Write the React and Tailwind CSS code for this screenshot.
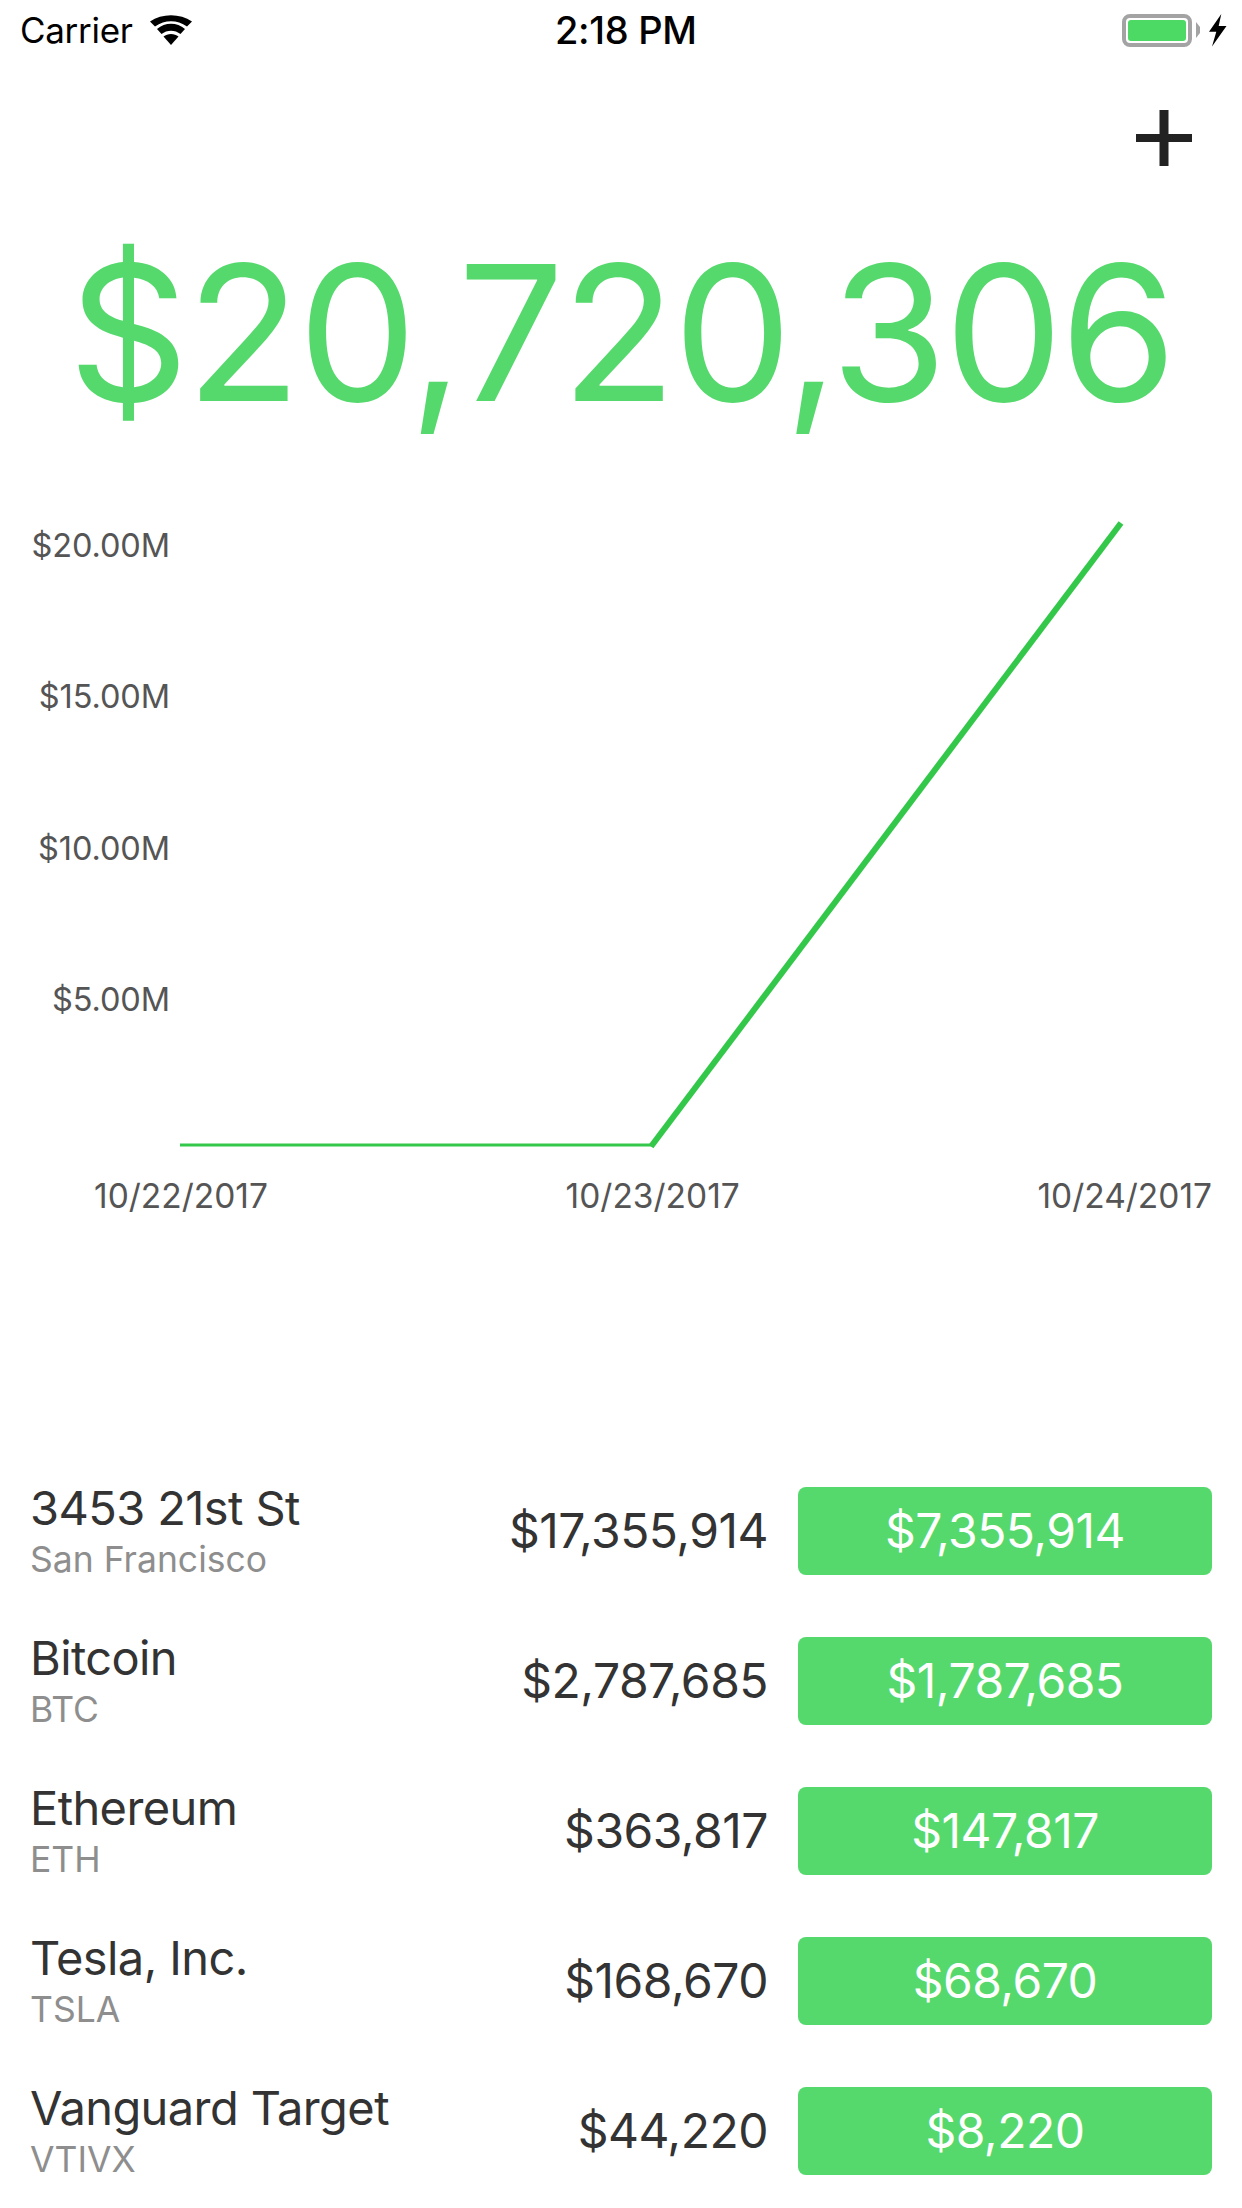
import React from "react";

const FONT = "font-['Inter','Liberation_Sans',sans-serif]";

const holdings = [
  { name: "3453 21st St", sub: "San Francisco", value: "$17,355,914", gain: "$7,355,914" },
  { name: "Bitcoin", sub: "BTC", value: "$2,787,685", gain: "$1,787,685" },
  { name: "Ethereum", sub: "ETH", value: "$363,817", gain: "$147,817" },
  { name: "Tesla, Inc.", sub: "TSLA", value: "$168,670", gain: "$68,670" },
  { name: "Vanguard Target", sub: "VTIVX", value: "$44,220", gain: "$8,220" },
];

const yLabels = ["$20.00M", "$15.00M", "$10.00M", "$5.00M"];
const xLabels = ["10/22/2017", "10/23/2017", "10/24/2017"];

const StatusBar = () => (
  <div className="h-[60px] flex items-center justify-between relative px-[20px]">
    <div className="flex items-center gap-[17px]">
      <span className="text-[35px] leading-[40px] text-black tracking-[-0.3px]">Carrier</span>
      <svg width="42" height="30" viewBox="0 0 42 30">
        <path d="M21 30 L13.5 21.5 C17.5 18 24.5 18 28.5 21.5 Z" fill="#000" />
        <path d="M11.5 19 L7 14 C15 7 27 7 35 14 L30.5 19 C25 14.5 17 14.5 11.5 19 Z" fill="#000" />
        <path d="M5 11.5 L0 6.5 C12 -2 30 -2 42 6.5 L37 11.5 C27 4.5 15 4.5 5 11.5 Z" fill="#000" />
      </svg>
    </div>
    <span className="absolute left-[555px] top-[10px] text-[38px] leading-[40px] font-medium text-black tracking-[-0.3px]">2:18 PM</span>
    <div className="flex items-center mr-[-5px]">
      <div className="w-[70px] h-[33px] rounded-[8px] border-[4px] border-[#a3a3a3] p-[2px]">
        <div className="w-full h-full rounded-[3px] bg-[#4cd964]" />
      </div>
      <svg width="4" height="16" viewBox="0 0 4 16" className="ml-[4px]">
        <path d="M0 0 L4 5 V11 L0 16 Z" fill="#a3a3a3" />
      </svg>
      <svg width="18" height="33" viewBox="0 0 18 33" className="ml-[9px]">
        <path d="M12.3 0 L0 17.7 H7.3 L3 32.5 L17.5 12 H9.7 Z" fill="#000" />
      </svg>
    </div>
  </div>
);

const Chart = () => (
  <div className="mt-[88px] ml-[30px] w-[1182px]">
    <div className="flex h-[656px]">
      <div className="w-[140px] flex flex-col gap-[111.3px] items-end mt-[6px]">
        {yLabels.map((l) => (
          <span key={l} className="text-[32.5px] leading-[40px] text-[#555555] whitespace-nowrap tracking-[-0.1px]">{l}</span>
        ))}
      </div>
      <svg width="1042" height="656" viewBox="0 0 1042 656" className="shrink-0">
        <path d="M10 625 H482" fill="none" stroke="#34c84a" strokeWidth="3" />
        <path d="M481 626.5 L951 3" fill="none" stroke="#34c84a" strokeWidth="6" />
      </svg>
    </div>
    <div className="flex justify-between ml-[64px]">
      {xLabels.map((l) => (
        <span key={l} className="text-[33.5px] leading-[40px] text-[#555555] whitespace-nowrap">{l}</span>
      ))}
    </div>
  </div>
);

const Row = ({ name, sub, value, gain }) => (
  <div className="flex items-center h-[88px] mb-[62px]">
    <div className="flex-1 flex flex-col">
      <span className="text-[47px] leading-[52px] text-[#333333] tracking-[-0.6px] whitespace-nowrap">{name}</span>
      <span className="text-[35.5px] leading-[40px] mt-[6px] text-[#8e8e8e] whitespace-nowrap">{sub}</span>
    </div>
    <span className="text-[48px] text-[#333333] tracking-[-0.5px] mr-[30px] whitespace-nowrap">{value}</span>
    <div className="w-[414px] h-[88px] rounded-[8px] bg-[#55d96c] flex items-center justify-center text-[48px] text-white tracking-[-0.5px]">
      {gain}
    </div>
  </div>
);

export default function App() {
  return (
    <div className={`w-[1242px] h-[2208px] bg-white overflow-hidden ${FONT}`}>
      <StatusBar />
      <div className="flex justify-end pr-[50px] pt-[50px]">
        <svg width="56" height="56" viewBox="0 0 56 56">
          <rect x="23.5" y="0" width="9" height="56" fill="#222222" />
          <rect x="0" y="24" width="56" height="8" fill="#222222" />
        </svg>
      </div>
      <div className="text-center text-[188.5px] leading-[200px] text-[#55d96c] tracking-[-3px] mt-[66px] whitespace-nowrap">
        $20,720,306
      </div>
      <Chart />
      <div className="mt-[271px] pl-[30px] pr-[30px]">
        {holdings.map((h) => (
          <Row key={h.name} {...h} />
        ))}
      </div>
    </div>
  );
}
